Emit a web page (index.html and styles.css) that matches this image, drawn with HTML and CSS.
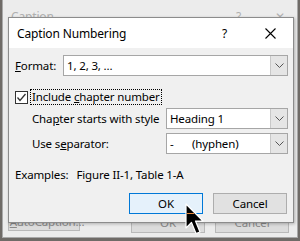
FILE: index.html
```html
<!DOCTYPE html>
<html lang="en">
<head>
    <meta charset="UTF-8">
    <title>Caption Numbering</title>
    <link rel="stylesheet" href="styles.css">
</head>
<body>
    <div class="desk">
        <div class="back-window">
            <div class="back-title">
                <span>Caption</span>
                <span class="back-tools"><span>?</span><span>&#x2715;</span></span>
            </div>
            <div class="back-buttons">
                <div class="btn back-auto"><u>A</u>utoCaption...</div>
                <div class="back-right">
                    <div class="btn">OK</div>
                    <div class="btn">Cancel</div>
                </div>
            </div>
        </div>

        <div class="dialog">
            <div class="titlebar">
                <span class="title">Caption Numbering</span>
                <span class="help">?</span>
                <span class="close">
                    <svg width="11" height="11" viewBox="0 0 11 11"><path d="M0.5 0.5 L10.5 10.5 M10.5 0.5 L0.5 10.5" stroke="#000" stroke-width="1.1" fill="none"/></svg>
                </span>
            </div>
            <div class="body">
                <div class="row">
                    <span class="label"><u>F</u>ormat:</span>
                    <div class="combo combo-wide">
                        <span class="value">1, 2, 3, ...</span>
                        <span class="arrow"><svg width="9" height="5" viewBox="0 0 9 5"><path d="M0.5 0.5 L4.5 4.5 L8.5 0.5" stroke="#555" fill="none"/></svg></span>
                    </div>
                </div>

                <div class="check-row">
                    <span class="checkbox">
                        <svg width="11" height="11" viewBox="0 0 11 11"><path d="M1.5 5.5 L4 8.5 L9.5 2" stroke="#333" stroke-width="1.3" fill="none"/></svg>
                    </span>
                    <span class="check-label">Include <u>c</u>hapter number</span>
                </div>

                <div class="row sub">
                    <span class="label">Cha<u>p</u>ter starts with style</span>
                    <div class="combo combo-short">
                        <span class="value">Heading 1</span>
                        <span class="arrow"><svg width="9" height="5" viewBox="0 0 9 5"><path d="M0.5 0.5 L4.5 4.5 L8.5 0.5" stroke="#555" fill="none"/></svg></span>
                    </div>
                </div>

                <div class="row sub sep-row">
                    <span class="label">Use s<u>e</u>parator:</span>
                    <div class="combo combo-short">
                        <span class="value"><span class="dash">-</span>(hyphen)</span>
                        <span class="arrow"><svg width="9" height="5" viewBox="0 0 9 5"><path d="M0.5 0.5 L4.5 4.5 L8.5 0.5" stroke="#555" fill="none"/></svg></span>
                    </div>
                </div>

                <div class="examples">
                    <span class="ex-label">Examples:</span>
                    <span>Figure II-1, Table 1-A</span>
                </div>

                <div class="buttons">
                    <div class="btn btn-default">OK</div>
                    <div class="btn">Cancel</div>
                </div>
            </div>
        </div>

        <svg class="cursor" width="20" height="33" viewBox="0 0 20 33">
            <path d="M1 1 L1 25 L6.5 19.5 L11 30.5 L15 29 L10.5 18 L18 18 Z" fill="#000" stroke="#fff" stroke-width="1.2" stroke-linejoin="round"/>
            <path d="M2 10.5 L9 10.5" stroke="#e8893a" stroke-width="1"/>
        </svg>
    </div>
</body>
</html>
```

FILE: styles.css
```css
body {
    margin: 0;
    font-family: 'Noto Sans', 'Liberation Sans', sans-serif;
    font-size: 11.5px;
    letter-spacing: -0.15px;
    color: #000;
}
.desk {
    position: relative;
    width: 300px;
    height: 241px;
    overflow: hidden;
    background: #6f6b67;
}
.back-window {
    position: absolute;
    left: 2px;
    top: -2px;
    width: 294px;
    height: 238px;
    background: #ececec;
    border: 1px solid #a9a9a9;
    display: flex;
    flex-direction: column;
    justify-content: space-between;
}
.back-title {
    display: flex;
    justify-content: space-between;
    padding: 9px 12px 0 8px;
    color: #b0b0b0;
    font-size: 12px;
}
.back-tools {
    display: flex;
    gap: 34px;
}
.back-buttons {
    display: flex;
    justify-content: space-between;
    padding: 0 8px 4px 5px;
}
.back-buttons .btn {
    background: #dcdcdc;
    border-color: #b9b9b9;
    color: #8a8a8a;
}
.back-auto {
    width: 90px;
    justify-content: flex-start;
    padding-left: 6px;
    box-sizing: border-box;
}
.back-right {
    display: flex;
    gap: 10px;
}
.dialog {
    position: absolute;
    left: 8px;
    top: 17px;
    width: 284px;
    height: 204px;
    border: 1px solid #8c8c8c;
    background: #f0f0f0;
    box-shadow: 1px 1px 3px rgba(0, 0, 0, 0.25);
}
.titlebar {
    height: 30px;
    background: #fff;
    display: flex;
    align-items: center;
    padding-left: 8px;
}
.title {
    flex: 1;
    font-size: 12px;
}
.help {
    font-size: 12px;
    margin-right: 38px;
}
.close {
    display: flex;
    margin-right: 17px;
}
.body {
    padding: 7px 5px 0 6px;
}
.row {
    display: flex;
    align-items: center;
    justify-content: space-between;
}
.label {
    white-space: nowrap;
}
.row.sub {
    padding-left: 17px;
    margin-top: 3px;
}
.row.sep-row {
    margin-top: 4px;
}
.combo {
    height: 19px;
    border: 1px solid #a6a6a6;
    background: #fff;
    display: flex;
    align-items: center;
}
.combo-wide {
    width: 223px;
}
.combo-short {
    width: 120px;
}
.value {
    flex: 1;
    padding-left: 3px;
}
.dash {
    display: inline-block;
    width: 22px;
}
.arrow {
    width: 16px;
    height: 19px;
    border-left: 1px solid #c8c8c8;
    background: #e5e5e5;
    display: flex;
    align-items: center;
    justify-content: center;
}
.check-row {
    display: flex;
    align-items: center;
    margin-top: 13px;
    height: 16px;
}
.checkbox {
    width: 11px;
    height: 11px;
    border: 1px solid #333;
    background: #fff;
    display: flex;
}
.check-label {
    margin-left: 2px;
    padding: 0 1px;
    border: 1px dotted #000;
    line-height: 14px;
}
.examples {
    margin-top: 13px;
    display: flex;
    gap: 8px;
}
.buttons {
    display: flex;
    justify-content: flex-end;
    gap: 10px;
    margin-top: 11px;
    padding-right: 1px;
}
.btn {
    width: 72px;
    height: 19px;
    border: 1px solid #adadad;
    background: #e1e1e1;
    display: flex;
    align-items: center;
    justify-content: center;
}
.btn-default {
    border-color: #0078d7;
    background: #e5f1fb;
}
.cursor {
    position: absolute;
    left: 185px;
    top: 203px;
}
```
